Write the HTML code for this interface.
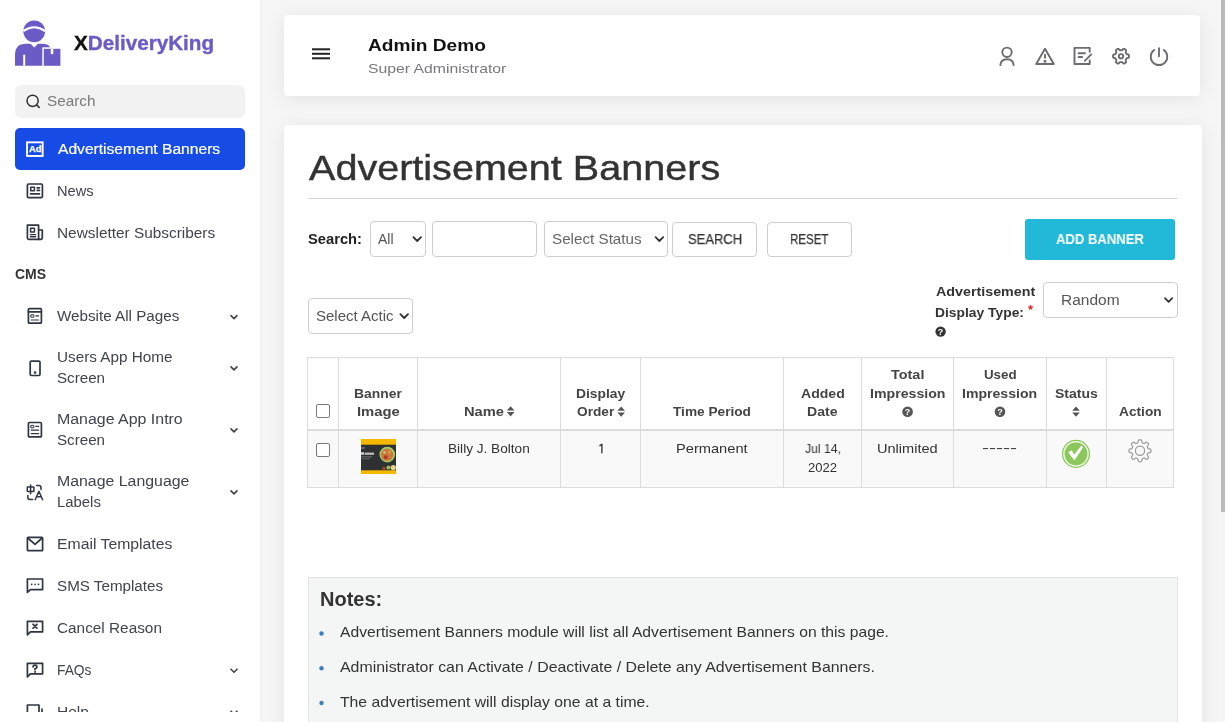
<!DOCTYPE html>
<html><head><meta charset="utf-8">
<style>
*{margin:0;padding:0;box-sizing:border-box}
html,body{width:1225px;height:722px;overflow:hidden;background:#f6f6f6;font-family:"Liberation Sans",sans-serif}
.a{position:absolute}
.t{position:absolute;white-space:nowrap;line-height:1;transform-origin:0 0;will-change:transform}
svg{position:absolute;overflow:visible}
.sb{left:0;top:0;width:260px;height:722px;background:#fff;box-shadow:0 0 4px rgba(0,0,0,0.05)}
.card{background:#fff;border-radius:4px;box-shadow:0 3px 20px rgba(0,0,0,0.08)}
.box{border:1px solid #cfcfcf;border-radius:4px;background:#fff}
.cl{position:absolute;width:1px;background:#dcdcdc}
</style></head><body>
<!-- sidebar -->
<div class="a sb"></div>
<!-- scrollbar -->
<div class="a" style="left:1221px;top:0;width:4px;height:722px;background:#f5f5f5"></div>
<div class="a" style="left:1221px;top:0;width:4px;height:512px;background:#b9b9b9"></div>

<!-- logo -->
<svg style="left:0;top:0" width="70" height="75" viewBox="0 0 70 75">
  <g fill="#6a5bc6">
    <circle cx="34.2" cy="31.3" r="10.9"/>
    <path d="M15,65.8 L15,55 Q15,43.8 26,43.8 L30.5,43.8 L34.2,47.5 L38,43.8 L42,43.8 Q48,43.8 50,47 L50,65.8 Z"/>
  </g>
  <path d="M23.3,31 Q34.2,23.5 45.1,31" stroke="#fff" stroke-width="2.2" fill="none"/>
  <rect x="23.2" y="54.5" width="2" height="12" rx="1" fill="#fff"/>
  <rect x="42.3" y="47.3" width="19.6" height="20" fill="#fff"/>
  <rect x="43.8" y="48.8" width="16.6" height="17" fill="#6a5bc6"/>
  <rect x="50.8" y="48.8" width="2.5" height="5.3" fill="#fff"/>
</svg>
<div class="t" style="left:73.5px;top:32.6px;font-size:20px;font-weight:700;color:#111;transform:scaleX(1.033);-webkit-text-stroke:0.35px currentColor"><span style="color:#111">X</span><span style="color:#6a5bc6;-webkit-text-stroke:0.35px #6a5bc6">DeliveryKing</span></div>

<!-- sidebar search -->
<div class="a" style="left:15px;top:85px;width:230px;height:33px;background:#f2f2f2;border-radius:6px"></div>
<svg style="left:0;top:0" width="60" height="120">
  <circle cx="32.6" cy="100.8" r="5.6" stroke="#333" stroke-width="1.5" fill="none"/>
  <line x1="36.7" y1="104.9" x2="39.2" y2="107.4" stroke="#333" stroke-width="1.5" stroke-linecap="round"/>
</svg>
<!-- active item -->
<div class="a" style="left:15px;top:128px;width:230px;height:42px;background:#164be6;border-radius:5px"></div>
<svg style="left:0;top:0" width="60" height="170">
  <rect x="27.05" y="142.35" width="15.6" height="13.6" stroke="#fff" stroke-width="1.9" fill="none"/>
  <text x="35.3" y="152" font-family="Liberation Sans" font-weight="700" font-size="9.3" fill="#fff" stroke="#fff" stroke-width="0.25" text-anchor="middle">Ad</text>
</svg>

<!-- sidebar icons -->
<svg style="left:0;top:0" width="260" height="722" fill="none" stroke="#2f3542" stroke-width="1.7" stroke-linejoin="round" stroke-linecap="round">
  <!-- news -->
  <rect x="27.4" y="184" width="15" height="13.6" rx="1.2"/>
  <rect x="30.8" y="187.3" width="3.6" height="3.4" stroke-width="1.5"/>
  <line x1="37.2" y1="187.8" x2="39.4" y2="187.8"/><line x1="37.2" y1="190.4" x2="39.4" y2="190.4"/>
  <line x1="30.6" y1="193.8" x2="39.4" y2="193.8"/>
  <!-- newsletter -->
  <path d="M27.4,225.2 H38.6 V239.3 H28.6 Q27.4,239.3 27.4,238 Z"/>
  <path d="M38.6,230 H42.3 V238 Q42.3,239.3 41,239.3 H38.6"/>
  <rect x="30.6" y="228.3" width="3.8" height="3.8" stroke-width="1.5"/>
  <line x1="30.4" y1="234.6" x2="35.6" y2="234.6" stroke-width="1.4"/><line x1="30.4" y1="236.8" x2="35.6" y2="236.8" stroke-width="1.4"/>
  <!-- website all pages -->
  <rect x="28.4" y="308.6" width="13" height="14.6" rx="1"/>
  <line x1="28.4" y1="311.8" x2="41.4" y2="311.8"/>
  <rect x="31.2" y="314.8" width="2.6" height="2.4" stroke-width="1"/>
  <line x1="35.8" y1="315.8" x2="38.6" y2="315.8" stroke-width="1.2"/>
  <line x1="31.2" y1="320" x2="38.6" y2="320" stroke-width="1.2"/>
  <!-- phone -->
  <rect x="30.2" y="361.1" width="9.8" height="14.4" rx="1.2"/>
  <circle cx="35.1" cy="372.6" r="0.5" fill="#343a46"/>
  <!-- manage app intro -->
  <rect x="28.4" y="422.5" width="13" height="14.4" rx="1"/>
  <rect x="31.2" y="425.4" width="2.6" height="2.4" stroke-width="1"/>
  <line x1="35.8" y1="426.4" x2="38.6" y2="426.4" stroke-width="1.2"/>
  <line x1="31.2" y1="430.2" x2="38.6" y2="430.2" stroke-width="1.2"/>
  <line x1="31.2" y1="433.6" x2="38.6" y2="433.6" stroke-width="1.2"/>
  <!-- language -->
  <g stroke-width="1.5">
  <rect x="27.3" y="487" width="6.6" height="4.4" rx="0.3"/>
  <line x1="30.6" y1="484.9" x2="30.6" y2="493.8"/>
  <path d="M36.6,485.4 H38.9 Q41,485.4 41,487.5 V489.6"/>
  <path d="M27.8,495.4 V497.2 Q27.8,499.4 30,499.4 H32.6"/>
  <path d="M35.2,499.7 L38.9,491.2 L42.6,499.7 M36.5,496.8 H41.3"/>
  </g>
  <!-- email -->
  <rect x="27.4" y="537.3" width="15.2" height="13.4" rx="0.8"/>
  <path d="M27.8,538 L35,544.4 L42.2,538"/>
  <!-- sms -->
  <path d="M27.4,592.4 V579 H42.6 V589.6 H30.4 Z"/>
  <line x1="31.6" y1="584.4" x2="31.7" y2="584.4" stroke-width="1.6"/><line x1="35" y1="584.4" x2="35.1" y2="584.4" stroke-width="1.6"/><line x1="38.4" y1="584.4" x2="38.5" y2="584.4" stroke-width="1.6"/>
  <!-- cancel -->
  <path d="M27.4,634.8 V621.3 H42.6 V631.8 H30.4 Z"/>
  <path d="M33.1,624.3 L36.9,628.1 M36.9,624.3 L33.1,628.1" stroke-width="1.8"/>
  <!-- faq -->
  <path d="M27.4,676.8 V663.3 H42.6 V673.8 H30.4 Z"/>
  <path d="M33.1,667 Q33.1,665.1 35,665.1 Q36.9,665.1 36.9,666.9 Q36.9,668.1 35,668.9 V669.7" stroke-width="1.7"/>
  <circle cx="35" cy="671.9" r="0.5" fill="#2f3542" stroke-width="1"/>
  <!-- help -->
  <path d="M27.4,720 V705 H39 V712"/>
  <line x1="42" y1="709" x2="42" y2="716"/>
  <!-- chevrons -->
  <g stroke="#444" stroke-width="1.6">
  <path d="M231,315.6 L234,318.6 L237,315.6"/>
  <path d="M231,366.9 L234,369.9 L237,366.9"/>
  <path d="M231,428.9 L234,431.9 L237,428.9"/>
  <path d="M231,490.9 L234,493.9 L237,490.9"/>
  <path d="M231,669.2 L234,672.2 L237,669.2"/>
  <path d="M231,711.2 L234,714.2 L237,711.2"/>
  </g>
</svg>

<!-- header card -->
<div class="a card" style="left:284px;top:15px;width:916px;height:81px"></div>
<svg style="left:0;top:0" width="1225" height="100" fill="none">
  <g stroke="#222" stroke-width="2">
    <line x1="312" y1="49.3" x2="330" y2="49.3"/><line x1="312" y1="53.8" x2="330" y2="53.8"/><line x1="312" y1="58.3" x2="330" y2="58.3"/>
  </g>
  <g stroke="#6b6b72" stroke-width="1.9" stroke-linecap="round" stroke-linejoin="round">
    <circle cx="1007" cy="52.3" r="4.7"/>
    <path d="M1000.4,65 Q1000.8,59.2 1007,59.2 Q1013.2,59.2 1013.6,65"/>
    <path d="M1045,48.8 L1053.8,64 H1036.2 Z"/>
    <line x1="1045" y1="54.6" x2="1045" y2="57.8"/>
    <circle cx="1045" cy="61.2" r="0.6" fill="#6b6b72"/>
    <path d="M1089.7,51.8 V47.9 H1074.5 V64 H1089.7 V60.4"/>
    <line x1="1078.6" y1="53.3" x2="1085" y2="53.3"/><line x1="1078.6" y1="57" x2="1082.2" y2="57"/>
    <line x1="1084.8" y1="60.8" x2="1091.2" y2="54.4"/>
    <circle cx="1159" cy="56.8" r="8" stroke-width="0" />
    <path d="M1154.2,50 A8.3,8.3 0 1 0 1163.8,50"/>
    <line x1="1159" y1="48.2" x2="1159" y2="56.2"/>
  </g>
  <g stroke="#6b6b72" stroke-width="1.9" stroke-linejoin="round">
    <path d="M1129.00,56.20 L1129.00,56.34 L1128.99,56.48 L1128.98,56.62 L1128.97,56.76 L1128.95,56.90 L1128.92,57.03 L1128.89,57.17 L1128.84,57.30 L1128.78,57.43 L1128.69,57.56 L1128.58,57.67 L1128.42,57.78 L1128.22,57.87 L1127.98,57.94 L1127.71,58.00 L1127.45,58.05 L1127.21,58.10 L1127.00,58.15 L1126.85,58.21 L1126.72,58.28 L1126.62,58.36 L1126.55,58.44 L1126.48,58.53 L1126.42,58.61 L1126.37,58.70 L1126.31,58.79 L1126.26,58.88 L1126.21,58.97 L1126.16,59.06 L1126.11,59.15 L1126.06,59.24 L1126.01,59.33 L1125.95,59.42 L1125.90,59.51 L1125.85,59.60 L1125.80,59.69 L1125.75,59.78 L1125.71,59.88 L1125.68,59.99 L1125.66,60.11 L1125.67,60.26 L1125.69,60.42 L1125.75,60.63 L1125.82,60.86 L1125.91,61.11 L1126.00,61.37 L1126.05,61.62 L1126.08,61.84 L1126.06,62.02 L1126.02,62.18 L1125.96,62.32 L1125.88,62.44 L1125.78,62.55 L1125.68,62.65 L1125.58,62.74 L1125.47,62.82 L1125.35,62.90 L1125.24,62.98 L1125.12,63.06 L1125.00,63.13 L1124.88,63.20 L1124.75,63.26 L1124.63,63.32 L1124.50,63.38 L1124.37,63.43 L1124.24,63.48 L1124.11,63.52 L1123.97,63.54 L1123.82,63.55 L1123.67,63.54 L1123.51,63.50 L1123.34,63.42 L1123.17,63.29 L1122.98,63.11 L1122.80,62.91 L1122.62,62.71 L1122.46,62.52 L1122.31,62.38 L1122.18,62.27 L1122.06,62.20 L1121.94,62.15 L1121.83,62.12 L1121.73,62.11 L1121.62,62.10 L1121.52,62.10 L1121.41,62.10 L1121.31,62.10 L1121.21,62.10 L1121.10,62.10 L1121.00,62.10 L1120.90,62.10 L1120.79,62.10 L1120.69,62.10 L1120.59,62.10 L1120.48,62.10 L1120.38,62.10 L1120.27,62.11 L1120.17,62.12 L1120.06,62.15 L1119.94,62.20 L1119.82,62.27 L1119.69,62.38 L1119.54,62.52 L1119.38,62.71 L1119.20,62.91 L1119.02,63.11 L1118.83,63.29 L1118.66,63.42 L1118.49,63.50 L1118.33,63.54 L1118.18,63.55 L1118.03,63.54 L1117.89,63.52 L1117.76,63.48 L1117.63,63.43 L1117.50,63.38 L1117.37,63.32 L1117.25,63.26 L1117.12,63.20 L1117.00,63.13 L1116.88,63.06 L1116.76,62.98 L1116.65,62.90 L1116.53,62.82 L1116.42,62.74 L1116.32,62.65 L1116.22,62.55 L1116.12,62.44 L1116.04,62.32 L1115.98,62.18 L1115.94,62.02 L1115.92,61.84 L1115.95,61.62 L1116.00,61.37 L1116.09,61.11 L1116.18,60.86 L1116.25,60.63 L1116.31,60.42 L1116.33,60.26 L1116.34,60.11 L1116.32,59.99 L1116.29,59.88 L1116.25,59.78 L1116.20,59.69 L1116.15,59.60 L1116.10,59.51 L1116.05,59.42 L1115.99,59.33 L1115.94,59.24 L1115.89,59.15 L1115.84,59.06 L1115.79,58.97 L1115.74,58.88 L1115.69,58.79 L1115.63,58.70 L1115.58,58.61 L1115.52,58.53 L1115.45,58.44 L1115.38,58.36 L1115.28,58.28 L1115.15,58.21 L1115.00,58.15 L1114.79,58.10 L1114.55,58.05 L1114.29,58.00 L1114.02,57.94 L1113.78,57.87 L1113.58,57.78 L1113.42,57.67 L1113.31,57.56 L1113.22,57.43 L1113.16,57.30 L1113.11,57.17 L1113.08,57.03 L1113.05,56.90 L1113.03,56.76 L1113.02,56.62 L1113.01,56.48 L1113.00,56.34 L1113.00,56.20 L1113.00,56.06 L1113.01,55.92 L1113.02,55.78 L1113.03,55.64 L1113.05,55.50 L1113.08,55.37 L1113.11,55.23 L1113.16,55.10 L1113.22,54.97 L1113.31,54.84 L1113.42,54.73 L1113.58,54.62 L1113.78,54.53 L1114.02,54.46 L1114.29,54.40 L1114.55,54.35 L1114.79,54.30 L1115.00,54.25 L1115.15,54.19 L1115.28,54.12 L1115.38,54.04 L1115.45,53.96 L1115.52,53.87 L1115.58,53.79 L1115.63,53.70 L1115.69,53.61 L1115.74,53.52 L1115.79,53.43 L1115.84,53.34 L1115.89,53.25 L1115.94,53.16 L1115.99,53.07 L1116.05,52.98 L1116.10,52.89 L1116.15,52.80 L1116.20,52.71 L1116.25,52.62 L1116.29,52.52 L1116.32,52.41 L1116.34,52.29 L1116.33,52.14 L1116.31,51.98 L1116.25,51.77 L1116.18,51.54 L1116.09,51.29 L1116.00,51.03 L1115.95,50.78 L1115.92,50.56 L1115.94,50.38 L1115.98,50.22 L1116.04,50.08 L1116.12,49.96 L1116.22,49.85 L1116.32,49.75 L1116.42,49.66 L1116.53,49.58 L1116.65,49.50 L1116.76,49.42 L1116.88,49.34 L1117.00,49.27 L1117.12,49.20 L1117.25,49.14 L1117.37,49.08 L1117.50,49.02 L1117.63,48.97 L1117.76,48.92 L1117.89,48.88 L1118.03,48.86 L1118.18,48.85 L1118.33,48.86 L1118.49,48.90 L1118.66,48.98 L1118.83,49.11 L1119.02,49.29 L1119.20,49.49 L1119.38,49.69 L1119.54,49.88 L1119.69,50.02 L1119.82,50.13 L1119.94,50.20 L1120.06,50.25 L1120.17,50.28 L1120.27,50.29 L1120.38,50.30 L1120.48,50.30 L1120.59,50.30 L1120.69,50.30 L1120.79,50.30 L1120.90,50.30 L1121.00,50.30 L1121.10,50.30 L1121.21,50.30 L1121.31,50.30 L1121.41,50.30 L1121.52,50.30 L1121.62,50.30 L1121.73,50.29 L1121.83,50.28 L1121.94,50.25 L1122.06,50.20 L1122.18,50.13 L1122.31,50.02 L1122.46,49.88 L1122.62,49.69 L1122.80,49.49 L1122.98,49.29 L1123.17,49.11 L1123.34,48.98 L1123.51,48.90 L1123.67,48.86 L1123.82,48.85 L1123.97,48.86 L1124.11,48.88 L1124.24,48.92 L1124.37,48.97 L1124.50,49.02 L1124.63,49.08 L1124.75,49.14 L1124.88,49.20 L1125.00,49.27 L1125.12,49.34 L1125.24,49.42 L1125.35,49.50 L1125.47,49.58 L1125.58,49.66 L1125.68,49.75 L1125.78,49.85 L1125.88,49.96 L1125.96,50.08 L1126.02,50.22 L1126.06,50.38 L1126.08,50.56 L1126.05,50.78 L1126.00,51.03 L1125.91,51.29 L1125.82,51.54 L1125.75,51.77 L1125.69,51.98 L1125.67,52.14 L1125.66,52.29 L1125.68,52.41 L1125.71,52.52 L1125.75,52.62 L1125.80,52.71 L1125.85,52.80 L1125.90,52.89 L1125.95,52.98 L1126.01,53.07 L1126.06,53.16 L1126.11,53.25 L1126.16,53.34 L1126.21,53.43 L1126.26,53.52 L1126.31,53.61 L1126.37,53.70 L1126.42,53.79 L1126.48,53.87 L1126.55,53.96 L1126.62,54.04 L1126.72,54.12 L1126.85,54.19 L1127.00,54.25 L1127.21,54.30 L1127.45,54.35 L1127.71,54.40 L1127.98,54.46 L1128.22,54.53 L1128.42,54.62 L1128.58,54.73 L1128.69,54.84 L1128.78,54.97 L1128.84,55.10 L1128.89,55.23 L1128.92,55.37 L1128.95,55.50 L1128.97,55.64 L1128.98,55.78 L1128.99,55.92 L1129.00,56.06 Z"/>
    <circle cx="1121" cy="56.3" r="2.2"/>
  </g>
</svg>

<!-- content card -->
<div class="a card" style="left:284px;top:125px;width:918px;height:640px"></div>
<div class="a" style="left:308px;top:198px;width:870px;height:1px;background:#d6d6d6"></div>

<!-- search controls -->
<div class="a box" style="left:370px;top:221px;width:56px;height:36px"></div>
<div class="a box" style="left:432px;top:221px;width:105px;height:36px"></div>
<div class="a box" style="left:544px;top:221px;width:124px;height:36px"></div>
<div class="a box" style="left:672px;top:222px;width:85px;height:35px"></div>
<div class="a box" style="left:767px;top:222px;width:85px;height:35px"></div>
<div class="a" style="left:1025px;top:219px;width:150px;height:41px;background:#22b9d8;border-radius:3px"></div>
<div class="a box" style="left:308px;top:298px;width:105px;height:36px"></div>
<div class="a box" style="left:1043px;top:282px;width:135px;height:36px"></div>
<svg style="left:0;top:0" width="1225" height="350" fill="none" stroke="#333" stroke-width="1.8" stroke-linecap="round" stroke-linejoin="round">
  <path d="M413.4,237.2 L417.2,241 L421,237.2"/>
  <path d="M655.6,237.2 L659.4,241 L663.2,237.2"/>
  <path d="M400.4,314.2 L404.2,318 L408,314.2"/>
  <path d="M1165,298.2 L1168.6,301.8 L1172.2,298.2"/>
</svg>
<!-- required star + help -->
<div class="t" style="left:1027.5px;top:302.5px;font-size:13px;font-weight:700;color:#e02020">*</div>
<svg style="left:0;top:0" width="1225" height="350">
  <circle cx="940.6" cy="331.6" r="5.2" fill="#333"/>
  <text x="940.6" y="335.2" font-family="Liberation Sans" font-weight="700" font-size="9" fill="#fff" text-anchor="middle">?</text>
</svg>

<!-- table -->
<div class="a" style="left:307px;top:357px;width:867px;height:131px;border:1px solid #dcdcdc;background:#fff"></div>
<div class="a" style="left:308px;top:431px;width:865px;height:56px;background:#f9f9f9"></div>
<div class="a" style="left:308px;top:429px;width:865px;height:2px;background:#dcdcdc"></div>
<div class="cl" style="left:338px;top:358px;height:129px"></div>
<div class="cl" style="left:417px;top:358px;height:129px"></div>
<div class="cl" style="left:560px;top:358px;height:129px"></div>
<div class="cl" style="left:640px;top:358px;height:129px"></div>
<div class="cl" style="left:783px;top:358px;height:129px"></div>
<div class="cl" style="left:861px;top:358px;height:129px"></div>
<div class="cl" style="left:953px;top:358px;height:129px"></div>
<div class="cl" style="left:1046px;top:358px;height:129px"></div>
<div class="cl" style="left:1106px;top:358px;height:129px"></div>
<!-- checkboxes -->
<div class="a" style="left:316px;top:404px;width:14px;height:14px;border:1.6px solid #7a7a7a;border-radius:2px;background:#fff"></div>
<div class="a" style="left:316px;top:443px;width:14px;height:14px;border:1.6px solid #7a7a7a;border-radius:2px;background:#fff"></div>
<!-- banner image -->
<svg style="left:361px;top:439px" width="35" height="35" viewBox="0 0 35 35">
  <rect width="35" height="35" fill="#f4b800"/>
  <rect y="5.7" width="35" height="25.6" fill="#2f3032"/>
  <rect x="0" y="8.5" width="4" height="1" fill="#999"/>
  <rect x="0" y="13.2" width="3" height="2.6" fill="#ccc"/>
  <rect x="3.6" y="13.6" width="9.4" height="2.2" fill="#bdbdbd"/>
  <rect x="0" y="17.4" width="11" height="0.9" fill="#777"/>
  <rect x="0" y="19.4" width="9" height="0.9" fill="#666"/>
  <circle cx="22" cy="16" r="1" fill="#b9a040"/>
  <circle cx="26.3" cy="15.6" r="7.8" fill="#a6cf6a"/>
  <circle cx="26.1" cy="15.8" r="6.2" fill="#c77a3a"/>
  <circle cx="24.8" cy="18.2" r="1.9" fill="#b5352a"/>
  <circle cx="28.4" cy="13" r="1.6" fill="#dba050"/>
  <circle cx="23.5" cy="13.5" r="1.2" fill="#e2c07a"/>
  <circle cx="32.2" cy="28.6" r="2.7" fill="#e6cf8a"/>
  <circle cx="27.4" cy="28.6" r="2" fill="#8fc05a"/>
  <circle cx="23" cy="29.6" r="1.8" fill="#9a4a26"/>
</svg>
<svg style="left:0;top:0" width="700" height="500"><path d="M599.5,445.9 L601.9,444.2 V453.3" stroke="#333" stroke-width="1.35" fill="none" stroke-linejoin="round"/></svg>
<!-- sort icons -->
<svg style="left:0;top:0" width="1225" height="500" fill="#555">
  <path d="M506.8,410.5 L510.6,406.2 L514.4,410.5 Z M506.8,412.1 L510.6,416.4 L514.4,412.1 Z"/>
  <path d="M617.4,410.8 L621.2,406.4 L625,410.8 Z M617.4,412.4 L621.2,416.8 L625,412.4 Z"/>
  <path d="M1072.2,410.8 L1076,406.4 L1079.8,410.8 Z M1072.2,412.4 L1076,416.8 L1079.8,412.4 Z"/>
  <circle cx="907.6" cy="411.7" r="5.3"/>
  <circle cx="1000" cy="411.7" r="5.3"/>
  <text x="907.6" y="415.3" font-family="Liberation Sans" font-weight="700" font-size="9" fill="#fff" text-anchor="middle">?</text>
  <text x="1000" y="415.3" font-family="Liberation Sans" font-weight="700" font-size="9" fill="#fff" text-anchor="middle">?</text>
</svg>
<!-- status + action -->
<svg style="left:0;top:0" width="1225" height="500">
  <circle cx="1076" cy="453.9" r="14.1" fill="#8bc75a"/>
  <circle cx="1076" cy="453.9" r="12.1" fill="none" stroke="#eef8e4" stroke-width="1.5"/>
  <path d="M1068.2,452.2 L1071.6,450.2 L1074.3,454.4 L1081.2,445.8 L1083.2,447.2 L1074.4,460.6 Z" fill="#fff"/>
  <path d="M1151.00,450.80 L1151.00,450.99 L1150.99,451.18 L1150.97,451.37 L1150.94,451.57 L1150.90,451.75 L1150.83,451.94 L1150.73,452.12 L1150.57,452.29 L1150.32,452.43 L1149.97,452.56 L1149.53,452.65 L1149.07,452.73 L1148.67,452.80 L1148.37,452.89 L1148.16,452.99 L1148.02,453.10 L1147.92,453.22 L1147.84,453.35 L1147.77,453.48 L1147.72,453.61 L1147.66,453.74 L1147.60,453.87 L1147.55,454.00 L1147.49,454.14 L1147.44,454.27 L1147.39,454.40 L1147.35,454.54 L1147.31,454.69 L1147.30,454.85 L1147.32,455.03 L1147.40,455.24 L1147.55,455.52 L1147.78,455.85 L1148.05,456.23 L1148.29,456.61 L1148.45,456.94 L1148.52,457.22 L1148.52,457.45 L1148.46,457.65 L1148.38,457.83 L1148.28,458.00 L1148.16,458.15 L1148.04,458.30 L1147.91,458.44 L1147.78,458.58 L1147.64,458.71 L1147.50,458.84 L1147.35,458.96 L1147.20,459.08 L1147.03,459.18 L1146.85,459.26 L1146.65,459.32 L1146.42,459.32 L1146.14,459.25 L1145.81,459.09 L1145.43,458.85 L1145.05,458.58 L1144.72,458.35 L1144.44,458.20 L1144.23,458.12 L1144.05,458.10 L1143.89,458.11 L1143.74,458.15 L1143.60,458.19 L1143.47,458.24 L1143.34,458.29 L1143.20,458.35 L1143.07,458.40 L1142.94,458.46 L1142.81,458.52 L1142.68,458.57 L1142.55,458.64 L1142.42,458.72 L1142.30,458.82 L1142.19,458.96 L1142.09,459.17 L1142.00,459.47 L1141.93,459.87 L1141.85,460.33 L1141.76,460.77 L1141.63,461.12 L1141.49,461.37 L1141.32,461.53 L1141.14,461.63 L1140.95,461.70 L1140.77,461.74 L1140.57,461.77 L1140.38,461.79 L1140.19,461.80 L1140.00,461.80 L1139.81,461.80 L1139.62,461.79 L1139.43,461.77 L1139.23,461.74 L1139.05,461.70 L1138.86,461.63 L1138.68,461.53 L1138.51,461.37 L1138.37,461.12 L1138.24,460.77 L1138.15,460.33 L1138.07,459.87 L1138.00,459.47 L1137.91,459.17 L1137.81,458.96 L1137.70,458.82 L1137.58,458.72 L1137.45,458.64 L1137.32,458.57 L1137.19,458.52 L1137.06,458.46 L1136.93,458.40 L1136.80,458.35 L1136.66,458.29 L1136.53,458.24 L1136.40,458.19 L1136.26,458.15 L1136.11,458.11 L1135.95,458.10 L1135.77,458.12 L1135.56,458.20 L1135.28,458.35 L1134.95,458.58 L1134.57,458.85 L1134.19,459.09 L1133.86,459.25 L1133.58,459.32 L1133.35,459.32 L1133.15,459.26 L1132.97,459.18 L1132.80,459.08 L1132.65,458.96 L1132.50,458.84 L1132.36,458.71 L1132.22,458.58 L1132.09,458.44 L1131.96,458.30 L1131.84,458.15 L1131.72,458.00 L1131.62,457.83 L1131.54,457.65 L1131.48,457.45 L1131.48,457.22 L1131.55,456.94 L1131.71,456.61 L1131.95,456.23 L1132.22,455.85 L1132.45,455.52 L1132.60,455.24 L1132.68,455.03 L1132.70,454.85 L1132.69,454.69 L1132.65,454.54 L1132.61,454.40 L1132.56,454.27 L1132.51,454.14 L1132.45,454.00 L1132.40,453.87 L1132.34,453.74 L1132.28,453.61 L1132.23,453.48 L1132.16,453.35 L1132.08,453.22 L1131.98,453.10 L1131.84,452.99 L1131.63,452.89 L1131.33,452.80 L1130.93,452.73 L1130.47,452.65 L1130.03,452.56 L1129.68,452.43 L1129.43,452.29 L1129.27,452.12 L1129.17,451.94 L1129.10,451.75 L1129.06,451.57 L1129.03,451.37 L1129.01,451.18 L1129.00,450.99 L1129.00,450.80 L1129.00,450.61 L1129.01,450.42 L1129.03,450.23 L1129.06,450.03 L1129.10,449.85 L1129.17,449.66 L1129.27,449.48 L1129.43,449.31 L1129.68,449.17 L1130.03,449.04 L1130.47,448.95 L1130.93,448.87 L1131.33,448.80 L1131.63,448.71 L1131.84,448.61 L1131.98,448.50 L1132.08,448.38 L1132.16,448.25 L1132.23,448.12 L1132.28,447.99 L1132.34,447.86 L1132.40,447.73 L1132.45,447.60 L1132.51,447.46 L1132.56,447.33 L1132.61,447.20 L1132.65,447.06 L1132.69,446.91 L1132.70,446.75 L1132.68,446.57 L1132.60,446.36 L1132.45,446.08 L1132.22,445.75 L1131.95,445.37 L1131.71,444.99 L1131.55,444.66 L1131.48,444.38 L1131.48,444.15 L1131.54,443.95 L1131.62,443.77 L1131.72,443.60 L1131.84,443.45 L1131.96,443.30 L1132.09,443.16 L1132.22,443.02 L1132.36,442.89 L1132.50,442.76 L1132.65,442.64 L1132.80,442.52 L1132.97,442.42 L1133.15,442.34 L1133.35,442.28 L1133.58,442.28 L1133.86,442.35 L1134.19,442.51 L1134.57,442.75 L1134.95,443.02 L1135.28,443.25 L1135.56,443.40 L1135.77,443.48 L1135.95,443.50 L1136.11,443.49 L1136.26,443.45 L1136.40,443.41 L1136.53,443.36 L1136.66,443.31 L1136.80,443.25 L1136.93,443.20 L1137.06,443.14 L1137.19,443.08 L1137.32,443.03 L1137.45,442.96 L1137.58,442.88 L1137.70,442.78 L1137.81,442.64 L1137.91,442.43 L1138.00,442.13 L1138.07,441.73 L1138.15,441.27 L1138.24,440.83 L1138.37,440.48 L1138.51,440.23 L1138.68,440.07 L1138.86,439.97 L1139.05,439.90 L1139.23,439.86 L1139.43,439.83 L1139.62,439.81 L1139.81,439.80 L1140.00,439.80 L1140.19,439.80 L1140.38,439.81 L1140.57,439.83 L1140.77,439.86 L1140.95,439.90 L1141.14,439.97 L1141.32,440.07 L1141.49,440.23 L1141.63,440.48 L1141.76,440.83 L1141.85,441.27 L1141.93,441.73 L1142.00,442.13 L1142.09,442.43 L1142.19,442.64 L1142.30,442.78 L1142.42,442.88 L1142.55,442.96 L1142.68,443.03 L1142.81,443.08 L1142.94,443.14 L1143.07,443.20 L1143.20,443.25 L1143.34,443.31 L1143.47,443.36 L1143.60,443.41 L1143.74,443.45 L1143.89,443.49 L1144.05,443.50 L1144.23,443.48 L1144.44,443.40 L1144.72,443.25 L1145.05,443.02 L1145.43,442.75 L1145.81,442.51 L1146.14,442.35 L1146.42,442.28 L1146.65,442.28 L1146.85,442.34 L1147.03,442.42 L1147.20,442.52 L1147.35,442.64 L1147.50,442.76 L1147.64,442.89 L1147.78,443.02 L1147.91,443.16 L1148.04,443.30 L1148.16,443.45 L1148.28,443.60 L1148.38,443.77 L1148.46,443.95 L1148.52,444.15 L1148.52,444.38 L1148.45,444.66 L1148.29,444.99 L1148.05,445.37 L1147.78,445.75 L1147.55,446.08 L1147.40,446.36 L1147.32,446.57 L1147.30,446.75 L1147.31,446.91 L1147.35,447.06 L1147.39,447.20 L1147.44,447.33 L1147.49,447.46 L1147.55,447.60 L1147.60,447.73 L1147.66,447.86 L1147.72,447.99 L1147.77,448.12 L1147.84,448.25 L1147.92,448.38 L1148.02,448.50 L1148.16,448.61 L1148.37,448.71 L1148.67,448.80 L1149.07,448.87 L1149.53,448.95 L1149.97,449.04 L1150.32,449.17 L1150.57,449.31 L1150.73,449.48 L1150.83,449.66 L1150.90,449.85 L1150.94,450.03 L1150.97,450.23 L1150.99,450.42 L1151.00,450.61 Z" fill="none" stroke="#9a9a9a" stroke-width="1.2"/>
  <circle cx="1140" cy="450.8" r="4.6" fill="none" stroke="#9a9a9a" stroke-width="1.2"/>
</svg>

<!-- notes -->
<div class="a" style="left:308px;top:577px;width:870px;height:200px;background:#f4f6f6;border:1px solid #e2e4e4"></div>
<svg style="left:0;top:0" width="400" height="722" fill="#3c7fc0">
  <circle cx="321.5" cy="633.5" r="2.2"/>
  <circle cx="321.5" cy="668.3" r="2.2"/>
  <circle cx="321.5" cy="703" r="2.2"/>
</svg>

<span class="t" style="left:47.20px;top:93.70px;font-size:14px;color:#7a7a7a;font-weight:400;transform:scaleX(1.0923);">Search</span>
<span class="t" style="left:57.60px;top:142.01px;font-size:14px;color:#ffffff;font-weight:400;transform:scaleX(1.1141);-webkit-text-stroke:0.2px #fff">Advertisement Banners</span>
<span class="t" style="left:57.30px;top:185.31px;font-size:13.8px;color:#3f4450;font-weight:400;transform:scaleX(1.0609);">News</span>
<span class="t" style="left:57.30px;top:227.20px;font-size:13.8px;color:#3f4450;font-weight:400;transform:scaleX(1.1149);">Newsletter Subscribers</span>
<span class="t" style="left:15.30px;top:266.60px;font-size:14px;color:#333333;font-weight:700;transform:scaleX(0.9936);">CMS</span>
<span class="t" style="left:57.20px;top:310.20px;font-size:13.8px;color:#3f4450;font-weight:400;transform:scaleX(1.1027);">Website All Pages</span>
<span class="t" style="left:56.80px;top:351.00px;font-size:13.8px;color:#3f4450;font-weight:400;transform:scaleX(1.1074);">Users App Home</span>
<span class="t" style="left:56.90px;top:371.61px;font-size:13.8px;color:#3f4450;font-weight:400;transform:scaleX(1.0984);">Screen</span>
<span class="t" style="left:56.80px;top:413.00px;font-size:13.8px;color:#3f4450;font-weight:400;transform:scaleX(1.1543);">Manage App Intro</span>
<span class="t" style="left:56.90px;top:433.70px;font-size:13.8px;color:#3f4450;font-weight:400;transform:scaleX(1.0984);">Screen</span>
<span class="t" style="left:56.80px;top:475.20px;font-size:13.8px;color:#3f4450;font-weight:400;transform:scaleX(1.1503);">Manage Language</span>
<span class="t" style="left:57.00px;top:495.61px;font-size:13.8px;color:#3f4450;font-weight:400;transform:scaleX(1.0786);">Labels</span>
<span class="t" style="left:56.90px;top:538.11px;font-size:13.8px;color:#3f4450;font-weight:400;transform:scaleX(1.1426);">Email Templates</span>
<span class="t" style="left:56.90px;top:579.81px;font-size:13.8px;color:#3f4450;font-weight:400;transform:scaleX(1.1006);">SMS Templates</span>
<span class="t" style="left:57.00px;top:622.31px;font-size:13.8px;color:#3f4450;font-weight:400;transform:scaleX(1.1123);">Cancel Reason</span>
<span class="t" style="left:57.00px;top:664.00px;font-size:13.8px;color:#3f4450;font-weight:400;transform:scaleX(0.9971);">FAQs</span>
<span class="t" style="left:57.00px;top:706.00px;font-size:13.8px;color:#3f4450;font-weight:400;transform:scaleX(1.1268);">Help</span>
<span class="t" style="left:367.90px;top:36.80px;font-size:16.5px;color:#111111;font-weight:700;transform:scaleX(1.1582);">Admin Demo</span>
<span class="t" style="left:367.70px;top:62.02px;font-size:13.6px;color:#77777f;font-weight:400;transform:scaleX(1.1583);">Super Administrator</span>
<span class="t" style="left:309.40px;top:149.81px;font-size:35px;color:#333333;font-weight:400;transform:scaleX(1.1303);-webkit-text-stroke:0.45px #333">Advertisement Banners</span>
<span class="t" style="left:308.30px;top:231.51px;font-size:14px;color:#222222;font-weight:700;transform:scaleX(1.0506);">Search:</span>
<span class="t" style="left:378.30px;top:231.81px;font-size:14px;color:#555555;font-weight:400;transform:scaleX(0.9744);">All</span>
<span class="t" style="left:551.70px;top:231.81px;font-size:14px;color:#666666;font-weight:400;transform:scaleX(1.0861);">Select Status</span>
<span class="t" style="left:687.50px;top:231.81px;font-size:14px;color:#333333;font-weight:400;transform:scaleX(0.9280);-webkit-text-stroke:0.25px #333">SEARCH</span>
<span class="t" style="left:790.00px;top:231.81px;font-size:14px;color:#333333;font-weight:400;transform:scaleX(0.8244);-webkit-text-stroke:0.25px #333">RESET</span>
<span class="t" style="left:1056.00px;top:232.01px;font-size:14px;color:#ffffff;font-weight:700;transform:scaleX(0.9330);">ADD BANNER</span>
<span class="t" style="left:316.00px;top:309.01px;font-size:14px;color:#555555;font-weight:400;transform:scaleX(1.0718);">Select Actic</span>
<span class="t" style="left:935.50px;top:285.31px;font-size:13px;color:#333333;font-weight:700;transform:scaleX(1.0986);">Advertisement</span>
<span class="t" style="left:934.70px;top:305.81px;font-size:13px;color:#333333;font-weight:700;transform:scaleX(1.0646);">Display Type:</span>
<span class="t" style="left:1060.70px;top:292.60px;font-size:14px;color:#555555;font-weight:400;transform:scaleX(1.1078);">Random</span>
<span class="t" style="left:354.00px;top:387.21px;font-size:13px;color:#444444;font-weight:700;transform:scaleX(1.0670);">Banner</span>
<span class="t" style="left:356.50px;top:405.01px;font-size:13px;color:#444444;font-weight:700;transform:scaleX(1.1383);">Image</span>
<span class="t" style="left:464.40px;top:405.01px;font-size:13px;color:#444444;font-weight:700;transform:scaleX(1.1299);">Name</span>
<span class="t" style="left:575.80px;top:387.01px;font-size:13px;color:#444444;font-weight:700;transform:scaleX(1.0649);">Display</span>
<span class="t" style="left:576.90px;top:405.01px;font-size:13px;color:#444444;font-weight:700;transform:scaleX(1.0537);">Order</span>
<span class="t" style="left:673.20px;top:405.01px;font-size:13px;color:#444444;font-weight:700;transform:scaleX(1.0512);">Time Period</span>
<span class="t" style="left:800.95px;top:387.01px;font-size:13px;color:#444444;font-weight:700;transform:scaleX(1.0817);">Added</span>
<span class="t" style="left:807.25px;top:405.01px;font-size:13px;color:#444444;font-weight:700;transform:scaleX(1.0816);">Date</span>
<span class="t" style="left:891.00px;top:368.11px;font-size:13px;color:#444444;font-weight:700;transform:scaleX(1.1096);">Total</span>
<span class="t" style="left:869.75px;top:387.01px;font-size:13px;color:#444444;font-weight:700;transform:scaleX(1.0879);">Impression</span>
<span class="t" style="left:983.60px;top:368.11px;font-size:13px;color:#444444;font-weight:700;transform:scaleX(1.0252);">Used</span>
<span class="t" style="left:962.20px;top:387.01px;font-size:13px;color:#444444;font-weight:700;transform:scaleX(1.0836);">Impression</span>
<span class="t" style="left:1055.00px;top:387.01px;font-size:13px;color:#444444;font-weight:700;transform:scaleX(1.0781);">Status</span>
<span class="t" style="left:1119.00px;top:405.01px;font-size:13px;color:#444444;font-weight:700;transform:scaleX(1.0545);">Action</span>
<span class="t" style="left:448.45px;top:442.31px;font-size:13px;color:#333333;font-weight:400;transform:scaleX(1.0474);">Billy J. Bolton</span>
<span class="t" style="left:676.40px;top:442.31px;font-size:13px;color:#333333;font-weight:400;transform:scaleX(1.1258);">Permanent</span>
<span class="t" style="left:805.25px;top:442.31px;font-size:13px;color:#333333;font-weight:400;transform:scaleX(0.9373);">Jul 14,</span>
<span class="t" style="left:807.95px;top:461.21px;font-size:13px;color:#333333;font-weight:400;transform:scaleX(1.0069);">2022</span>
<span class="t" style="left:877.05px;top:442.31px;font-size:13px;color:#333333;font-weight:400;transform:scaleX(1.1199);">Unlimited</span>
<span class="t" style="left:982.00px;top:441.31px;font-size:13px;color:#333333;font-weight:400;transform:scaleX(1.6204);">-----</span>
<span class="t" style="left:319.90px;top:588.81px;font-size:20px;color:#333333;font-weight:700;transform:scaleX(1.0000);">Notes:</span>
<span class="t" style="left:339.50px;top:624.81px;font-size:14.2px;color:#333333;font-weight:400;transform:scaleX(1.1050);">Advertisement Banners module will list all Advertisement Banners on this page.</span>
<span class="t" style="left:339.70px;top:659.90px;font-size:14.2px;color:#333333;font-weight:400;transform:scaleX(1.1213);">Administrator can Activate / Deactivate / Delete any Advertisement Banners.</span>
<span class="t" style="left:339.50px;top:694.90px;font-size:14.2px;color:#333333;font-weight:400;transform:scaleX(1.1095);">The advertisement will display one at a time.</span>

<!-- clip sidebar bottom -->
<div class="a" style="left:0;top:712px;width:260px;height:10px;background:#fff"></div>
</body></html>
